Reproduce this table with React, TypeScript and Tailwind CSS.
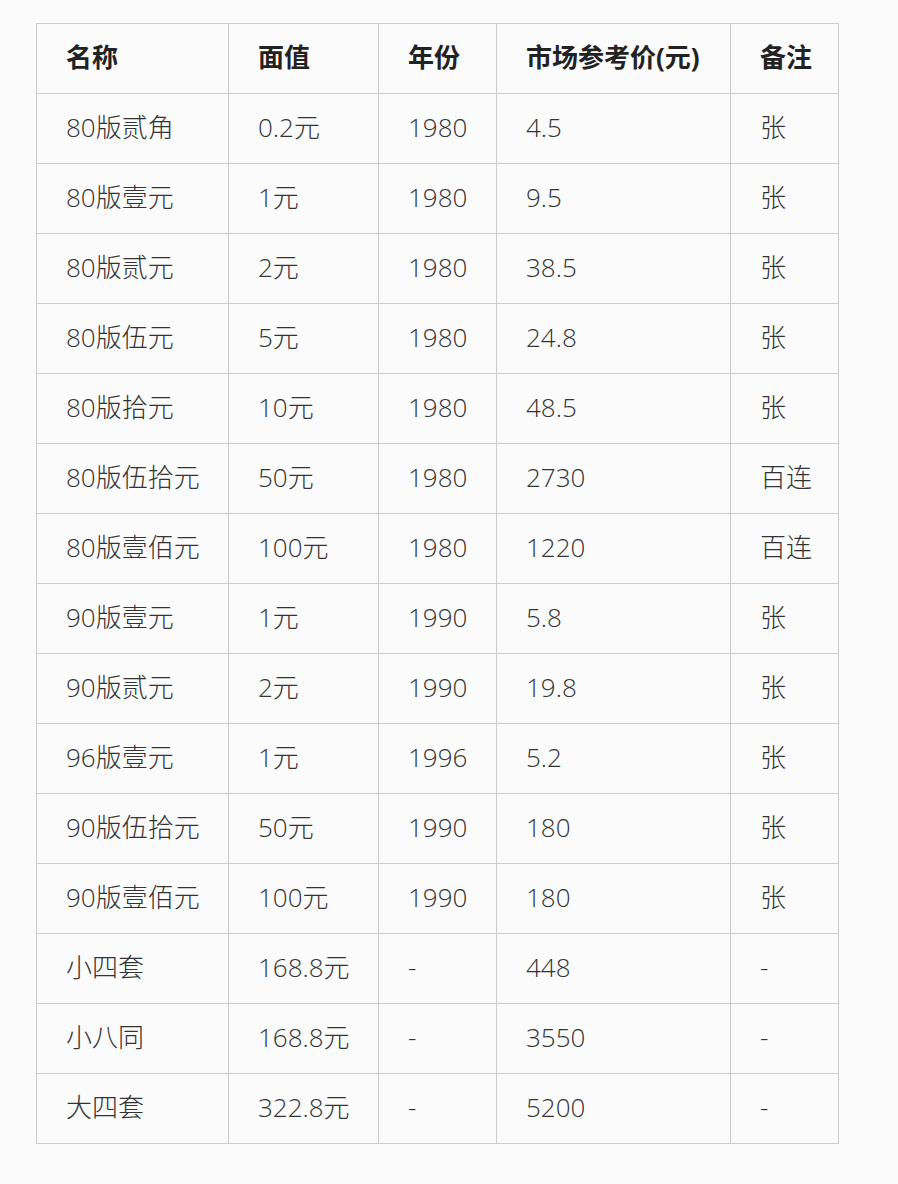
import React from "react";

const rows: string[][] = [
  ["80版贰角", "0.2元", "1980", "4.5", "张"],
  ["80版壹元", "1元", "1980", "9.5", "张"],
  ["80版贰元", "2元", "1980", "38.5", "张"],
  ["80版伍元", "5元", "1980", "24.8", "张"],
  ["80版拾元", "10元", "1980", "48.5", "张"],
  ["80版伍拾元", "50元", "1980", "2730", "百连"],
  ["80版壹佰元", "100元", "1980", "1220", "百连"],
  ["90版壹元", "1元", "1990", "5.8", "张"],
  ["90版贰元", "2元", "1990", "19.8", "张"],
  ["96版壹元", "1元", "1996", "5.2", "张"],
  ["90版伍拾元", "50元", "1990", "180", "张"],
  ["90版壹佰元", "100元", "1990", "180", "张"],
  ["小四套", "168.8元", "-", "448", "-"],
  ["小八同", "168.8元", "-", "3550", "-"],
  ["大四套", "322.8元", "-", "5200", "-"],
];

const headers = ["名称", "面值", "年份", "市场参考价(元)", "备注"];
const widths = ["w-[192px]", "w-[150px]", "w-[118px]", "w-[234px]", "w-[108px]"];

export default function App() {
  return (
    <div
      className="min-h-[1184px] w-[898px] bg-[#fbfbfc] pt-[23px] pl-[36px]"
      style={{ fontFamily: '"Open Sans", "Noto Sans CJK SC", sans-serif' }}
    >
      <table className="border-collapse table-fixed text-[26px] leading-[30px] text-[#333333]">
        <colgroup>
          {widths.map((w, i) => (
            <col key={i} className={w} />
          ))}
        </colgroup>
        <thead>
          <tr className="h-[70px]">
            {headers.map((h, i) => (
              <th
                key={i}
                className="border border-[#cdcdcd] pl-[29px] pb-[3px] text-left align-middle font-bold text-[#222222] whitespace-nowrap"
              >
                {h}
              </th>
            ))}
          </tr>
        </thead>
        <tbody>
          {rows.map((r, ri) => (
            <tr key={ri} className="h-[70px]">
              {r.map((c, ci) => (
                <td
                  key={ci}
                  className="border border-[#cdcdcd] pl-[29px] pb-[3px] text-left align-middle font-light whitespace-nowrap"
                >
                  {c}
                </td>
              ))}
            </tr>
          ))}
        </tbody>
      </table>
    </div>
  );
}
